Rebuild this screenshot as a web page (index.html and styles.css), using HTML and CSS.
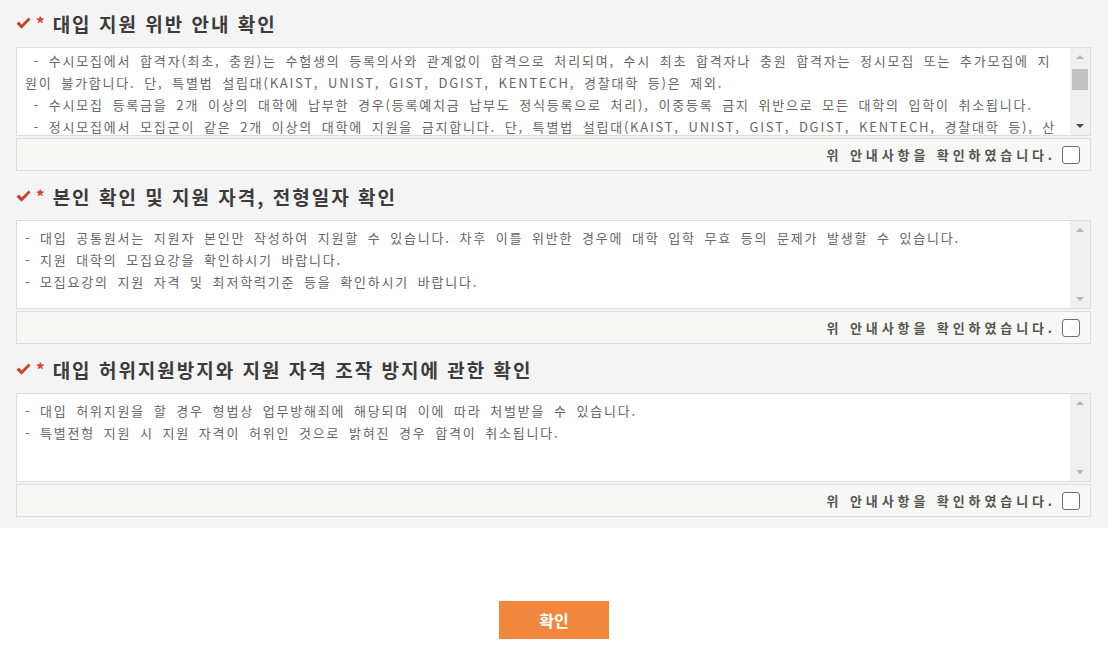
FILE: index.html
```html
<!DOCTYPE html>
<html lang="ko">
<head>
    <meta charset="UTF-8">
    <meta name="viewport" content="width=device-width, initial-scale=1.0">
    <title>지원 전 확인사항</title>
    <link rel="stylesheet" href="styles.css">
</head>
<body>

    <div class="agree-panel">
        <!-- 대입 지원 위반 안내 -->
        <section class="agree-item">
            <h3 class="agree-title">
                <svg class="check-icon" width="15" height="13" viewBox="0 0 15 13"><path d="M0.5 6.8 L3 4.6 L5.6 7.4 L12.6 0.5 L14.5 2.6 L5.6 11.8 Z" fill="#c8432b"/></svg>
                <span class="req">*</span>대입 지원 위반 안내 확인
            </h3>
            <div class="notice-box">
                <div class="notice-text scrolled">
                    <p> - 수시모집에서 합격자(최초, 충원)는 수험생의 등록의사와 관계없이 합격으로 처리되며, 수시 최초 합격자나 충원 합격자는 정시모집 또는 추가모집에 지원이 불가합니다. 단, 특별법 설립대(KAIST, UNIST, GIST, DGIST, KENTECH, 경찰대학 등)은 제외.</p>
                    <p> - 수시모집 등록금을 2개 이상의 대학에 납부한 경우(등록예치금 납부도 정식등록으로 처리), 이중등록 금지 위반으로 모든 대학의 입학이 취소됩니다.</p>
                    <p> - 정시모집에서 모집군이 같은 2개 이상의 대학에 지원을 금지합니다. 단, 특별법 설립대(KAIST, UNIST, GIST, DGIST, KENTECH, 경찰대학 등), 산업대, 전문대학은 제외.</p>
                    <p> - 정시모집 등록금을 2개 이상의 대학에 납부한 경우 이중등록 금지 위반으로 모든 대학의 입학이 취소됩니다.</p>
                </div>
                <div class="scroll-bar">
                    <span class="arrow up"></span>
                    <span class="track"><span class="thumb"></span></span>
                    <span class="arrow down active"></span>
                </div>
            </div>
            <label class="agree-check">위 안내사항을 확인하였습니다.<input type="checkbox"></label>
        </section>

        <!-- 본인 확인 -->
        <section class="agree-item">
            <h3 class="agree-title">
                <svg class="check-icon" width="15" height="13" viewBox="0 0 15 13"><path d="M0.5 6.8 L3 4.6 L5.6 7.4 L12.6 0.5 L14.5 2.6 L5.6 11.8 Z" fill="#c8432b"/></svg>
                <span class="req">*</span>본인 확인 및 지원 자격, 전형일자 확인
            </h3>
            <div class="notice-box">
                <div class="notice-text">
                    <p>- 대입 공통원서는 지원자 본인만 작성하여 지원할 수 있습니다. 차후 이를 위반한 경우에 대학 입학 무효 등의 문제가 발생할 수 있습니다.</p>
                    <p>- 지원 대학의 모집요강을 확인하시기 바랍니다.</p>
                    <p>- 모집요강의 지원 자격 및 최저학력기준 등을 확인하시기 바랍니다.</p>
                </div>
                <div class="scroll-bar">
                    <span class="arrow up"></span>
                    <span class="track"></span>
                    <span class="arrow down"></span>
                </div>
            </div>
            <label class="agree-check">위 안내사항을 확인하였습니다.<input type="checkbox"></label>
        </section>

        <!-- 허위지원 방지 -->
        <section class="agree-item">
            <h3 class="agree-title">
                <svg class="check-icon" width="15" height="13" viewBox="0 0 15 13"><path d="M0.5 6.8 L3 4.6 L5.6 7.4 L12.6 0.5 L14.5 2.6 L5.6 11.8 Z" fill="#c8432b"/></svg>
                <span class="req">*</span>대입 허위지원방지와 지원 자격 조작 방지에 관한 확인
            </h3>
            <div class="notice-box">
                <div class="notice-text">
                    <p>- 대입 허위지원을 할 경우 형법상 업무방해죄에 해당되며 이에 따라 처벌받을 수 있습니다.</p>
                    <p>- 특별전형 지원 시 지원 자격이 허위인 것으로 밝혀진 경우 합격이 취소됩니다.</p>
                </div>
                <div class="scroll-bar">
                    <span class="arrow up"></span>
                    <span class="track"></span>
                    <span class="arrow down"></span>
                </div>
            </div>
            <label class="agree-check">위 안내사항을 확인하였습니다.<input type="checkbox"></label>
        </section>
    </div>

    <div class="btn-area">
        <button class="btn-confirm">확인</button>
    </div>

</body>
</html>
```

FILE: styles.css
```css
body {
    margin: 0;
    padding: 0;
    background: #fff;
    font-family: "Noto Sans CJK KR", "Noto Sans", sans-serif;
    color: #333;
}

.agree-panel {
    background: #f4f4f4;
    padding: 0 17px 11px 16px;
}

.agree-item + .agree-item {
    margin-top: 2px;
}

.agree-title {
    display: flex;
    align-items: center;
    height: 47px;
    margin: 0;
    font-size: 19px;
    font-weight: bold;
    color: #3b3b3b;
    letter-spacing: 2px;
}

.check-icon {
    margin-right: 5px;
    flex-shrink: 0;
}

.req {
    color: #e0392e;
    font-size: 17px;
    margin-right: 6px;
    position: relative;
    top: -1px;
}

.notice-box {
    display: flex;
    height: 89px;
    box-sizing: border-box;
    border: 1px solid #dcdcdc;
    background: #fff;
}

.notice-text {
    flex: 1;
    overflow: hidden;
    padding: 6px 8px 0 8px;
    font-size: 13px;
    line-height: 22px;
    color: #666;
    letter-spacing: 1.8px;
    word-spacing: 3.3px;
}

.notice-text p {
    margin: 0;
    white-space: pre-wrap;
}

/* 스크롤된 상태 */
.notice-text.scrolled p:first-child {
    margin-top: -4px;
}

.scroll-bar {
    width: 20px;
    flex-shrink: 0;
    background: #f0f0f0;
    display: flex;
    flex-direction: column;
    align-items: center;
}

.arrow {
    height: 17px;
    width: 100%;
    position: relative;
}

.arrow::after {
    content: "";
    position: absolute;
    left: 6px;
    width: 0;
    height: 0;
    border-left: 4px solid transparent;
    border-right: 4px solid transparent;
}

.arrow.up::after {
    top: 7px;
    border-bottom: 4px solid #b4b4b4;
}

.arrow.down::after {
    top: 6px;
    border-top: 4px solid #b4b4b4;
}

.arrow.down.active::after {
    border-top-color: #4c4c4c;
}

.track {
    flex: 1;
    width: 100%;
    padding-top: 4px;
    box-sizing: border-box;
    display: flex;
    justify-content: center;
}

.thumb {
    width: 16px;
    height: 21px;
    background: #c1c1c1;
}

.agree-check {
    display: flex;
    justify-content: flex-end;
    align-items: center;
    height: 33px;
    box-sizing: border-box;
    margin-top: 2px;
    padding-right: 10px;
    background: #f7f7f3;
    border: 1px solid #dcdcdc;
    font-size: 13px;
    font-weight: bold;
    color: #555;
    letter-spacing: 3.9px;
}

.agree-check input {
    appearance: none;
    -webkit-appearance: none;
    width: 18px;
    height: 18px;
    margin: 0 0 0 6px;
    border: 1px solid #707070;
    border-radius: 3px;
    background: #fff;
}

.btn-area {
    text-align: center;
    padding-top: 73px;
}

.btn-confirm {
    width: 110px;
    height: 38px;
    border: none;
    background: #f0873c;
    color: #fff;
    font-family: "Noto Sans CJK KR", sans-serif;
    font-size: 16px;
    font-weight: bold;
    cursor: pointer;
}
```
